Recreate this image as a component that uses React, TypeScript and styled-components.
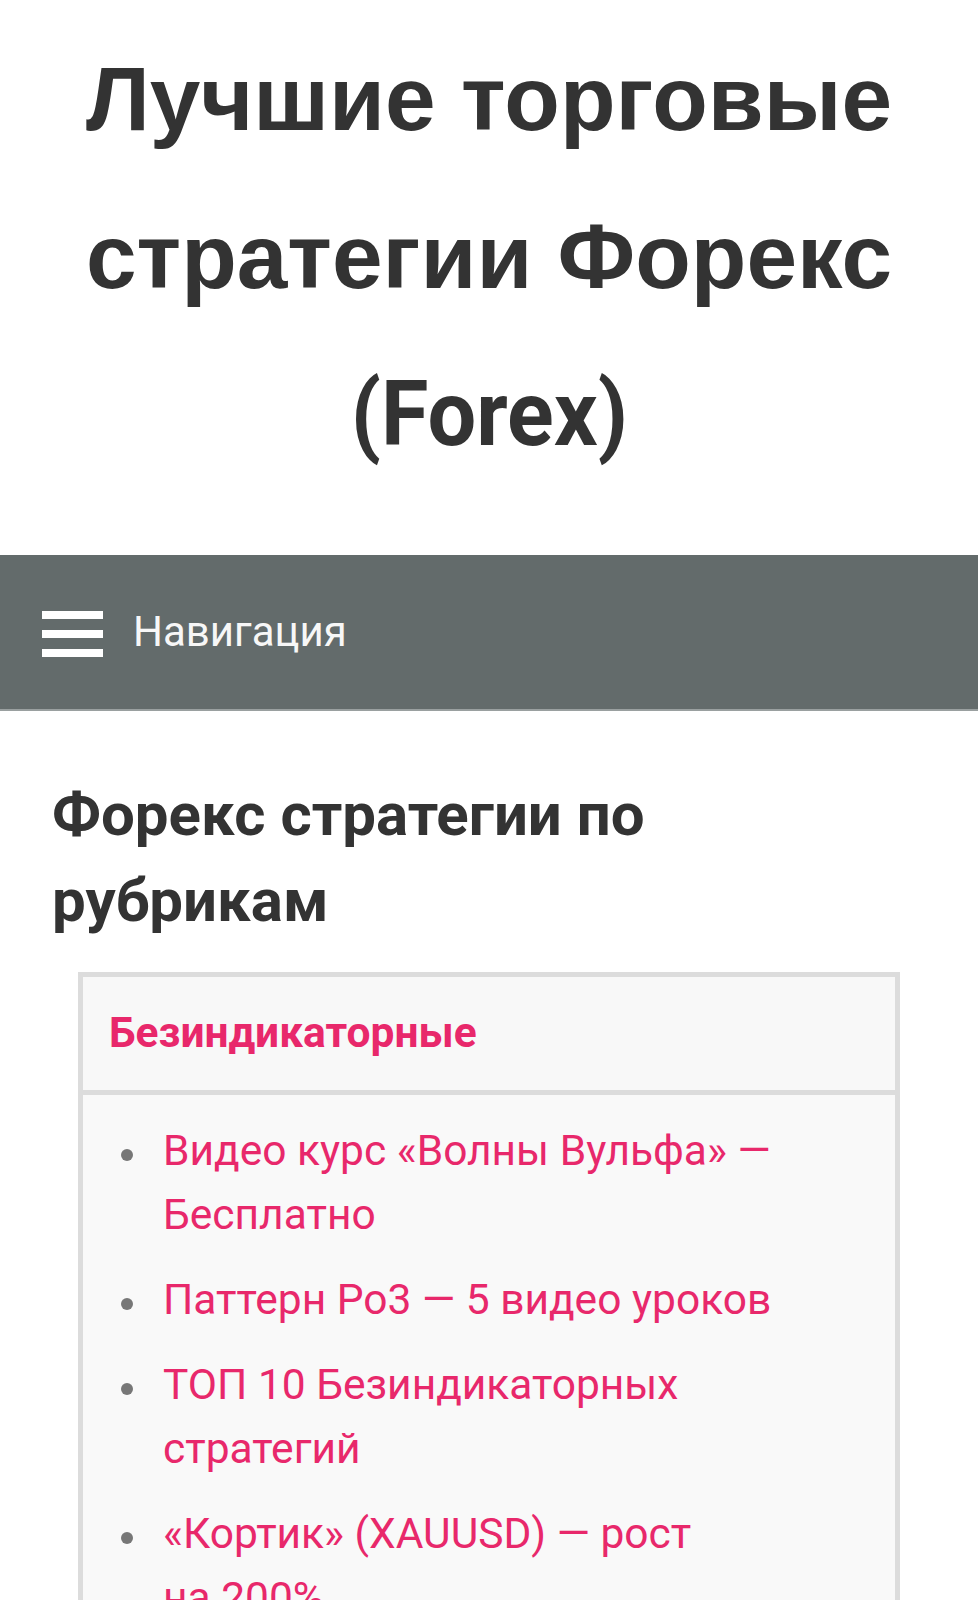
import React from "react";
import styled, { createGlobalStyle } from "styled-components";

const GlobalStyle = createGlobalStyle`
  html, body {
    margin: 0;
    padding: 0;
    background: #fff;
  }
  body {
    font-family: Roboto, "Liberation Sans", Arial, sans-serif;
    color: #333;
  }
  * {
    box-sizing: border-box;
  }
`;

const links = [
  "Видео курс «Волны Вульфа» — Бесплатно",
  "Паттерн Ро3 — 5 видео уроков",
  "ТОП 10 Безиндикаторных стратегий",
  "«Кортик» (XAUUSD) — рост на\u00a0200%",
];

export default function App() {
  return (
    <>
      <GlobalStyle />
      <Page>
        <SiteHeader>
          <SiteTitle>
            Лучшие торговые стратегии Форекс <Latin>(Forex)</Latin>
          </SiteTitle>
        </SiteHeader>

        <NavBar>
          <Burger aria-label="Навигация">
            <BurgerLine />
            <BurgerLine />
            <BurgerLine />
          </Burger>
          <NavLabel>Навигация</NavLabel>
        </NavBar>

        <Content>
          <SectionTitle>Форекс стратегии по рубрикам</SectionTitle>
          <CategoryBox>
            <CategoryHead>
              <CategoryLink href="#">Безиндикаторные</CategoryLink>
            </CategoryHead>
            <CategoryBody>
              <LinkList>
                {links.map((text) => (
                  <LinkItem key={text}>
                    <ItemLink href="#">{text}</ItemLink>
                  </LinkItem>
                ))}
              </LinkList>
            </CategoryBody>
          </CategoryBox>
        </Content>
      </Page>
    </>
  );
}

const Page = styled.div`
  width: 100%;
  min-height: 1600px;
  overflow: hidden;
`;

const SiteHeader = styled.header`
  padding: 20px 40px 61px;
  text-align: center;
`;

const SiteTitle = styled.h1`
  margin: 0;
  font-family: "Liberation Sans", Arial, sans-serif;
  font-weight: 700;
  font-size: 91px;
  line-height: 158px;
  color: #333;
`;

const Latin = styled.span`
  display: inline-block;
  font-family: Roboto, sans-serif;
  font-size: 90px;
  line-height: 158px;
  vertical-align: top;
  transform: scaleX(0.96);
`;

const NavBar = styled.nav`
  display: flex;
  align-items: center;
  gap: 30px;
  height: 156px;
  padding: 0 42px 2px;
  background: #636b6b;
  border-bottom: 2px solid #9aa0a0;
`;

const Burger = styled.span`
  display: flex;
  flex-direction: column;
  gap: 11px;
  width: 61px;
  margin-top: 5px;
`;

const BurgerLine = styled.span`
  display: block;
  height: 8px;
  background: #fff;
`;

const NavLabel = styled.span`
  font-family: Roboto, sans-serif;
  font-size: 42px;
  color: #f7f7f7;
`;

const Content = styled.main`
  padding: 61px 52px 0;
`;

const SectionTitle = styled.h2`
  max-width: 720px;
  margin: 0 0 28px;
  font-family: Roboto, sans-serif;
  font-weight: 700;
  font-size: 60px;
  line-height: 86px;
  color: #333;
`;

const CategoryBox = styled.section`
  margin: 0 26px;
  border: 5px solid #dcdcdc;
  background: #f9f9f9;
`;

const CategoryHead = styled.div`
  padding: 24px 26px 26px;
  background: #f8f8f8;
  border-bottom: 5px solid #dcdcdc;
`;

const CategoryLink = styled.a`
  font-family: Roboto, sans-serif;
  font-weight: 700;
  font-size: 42.5px;
  line-height: 63px;
  color: #e8286b;
  text-decoration: none;
`;

const CategoryBody = styled.div`
  padding: 24px 70px 30px 80px;
`;

const LinkList = styled.ul`
  margin: 0;
  padding: 0;
  list-style: none;
  display: flex;
  flex-direction: column;
  gap: 21px;
`;

const LinkItem = styled.li`
  position: relative;
  font-family: Roboto, sans-serif;
  font-size: 42.5px;
  line-height: 64px;

  &::before {
    content: "";
    position: absolute;
    left: -42px;
    top: 30px;
    width: 12px;
    height: 12px;
    border-radius: 50%;
    background: #777;
  }
`;

const ItemLink = styled.a`
  color: #e8286b;
  text-decoration: none;
`;
